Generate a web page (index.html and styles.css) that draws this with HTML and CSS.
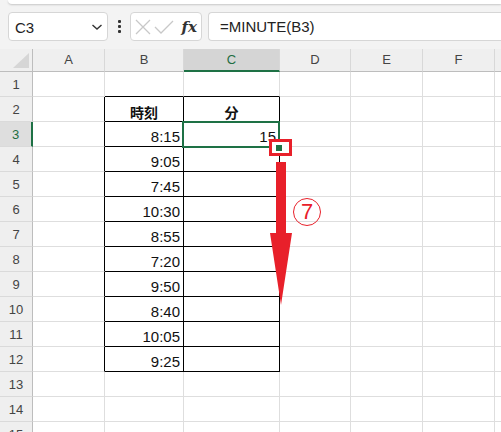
FILE: index.html
```html
<!DOCTYPE html>
<html lang="ja">
<head>
<meta charset="utf-8">
<link rel="stylesheet" href="styles.css">
</head>
<body>
<div class="app">
  <div class="topstrip"></div>
  <div class="toolbar">
    <div class="namebox"><span>C3</span>
      <svg class="chev" width="12" height="8" viewBox="0 0 12 8"><path d="M1.5 2 L6 6 L10.5 2" fill="none" stroke="#333" stroke-width="1.4"/></svg>
    </div>
    <div class="dots"><i></i><i></i><i></i></div>
    <div class="fxbox">
      <svg width="20" height="20" viewBox="0 0 20 20"><path d="M3 3 L17 17 M17 3 L3 17" stroke="#c8c8c8" stroke-width="1.3" fill="none"/></svg>
      <svg width="22" height="20" viewBox="0 0 22 20"><path d="M2 10 L8 16 L20 4" stroke="#c8c8c8" stroke-width="1.3" fill="none"/></svg>
      <span class="fx">fx</span>
    </div>
    <div class="formula">=MINUTE(B3)</div>
  </div>
  <div class="sheet">
    <div class="grid">
      <div class="corner"><span class="tri"></span></div>
      <div class="ch">A</div><div class="ch">B</div><div class="ch sel">C</div><div class="ch">D</div><div class="ch">E</div><div class="ch">F</div><div class="ch last"></div>

      <div class="rh">1</div><div class="c"></div><div class="c bb"></div><div class="c bb"></div><div class="c"></div><div class="c"></div><div class="c"></div><div class="c last"></div>
      <div class="rh">2</div><div class="c br"></div><div class="c tb hd">時刻</div><div class="c tb hd">分</div><div class="c"></div><div class="c"></div><div class="c"></div><div class="c last"></div>
      <div class="rh rsel">3</div><div class="c br"></div><div class="c tb">8:15</div><div class="c tb">15</div><div class="c"></div><div class="c"></div><div class="c"></div><div class="c last"></div>
      <div class="rh">4</div><div class="c br"></div><div class="c tb">9:05</div><div class="c tb"></div><div class="c"></div><div class="c"></div><div class="c"></div><div class="c last"></div>
      <div class="rh">5</div><div class="c br"></div><div class="c tb">7:45</div><div class="c tb"></div><div class="c"></div><div class="c"></div><div class="c"></div><div class="c last"></div>
      <div class="rh">6</div><div class="c br"></div><div class="c tb">10:30</div><div class="c tb"></div><div class="c"></div><div class="c"></div><div class="c"></div><div class="c last"></div>
      <div class="rh">7</div><div class="c br"></div><div class="c tb">8:55</div><div class="c tb"></div><div class="c"></div><div class="c"></div><div class="c"></div><div class="c last"></div>
      <div class="rh">8</div><div class="c br"></div><div class="c tb">7:20</div><div class="c tb"></div><div class="c"></div><div class="c"></div><div class="c"></div><div class="c last"></div>
      <div class="rh">9</div><div class="c br"></div><div class="c tb">9:50</div><div class="c tb"></div><div class="c"></div><div class="c"></div><div class="c"></div><div class="c last"></div>
      <div class="rh">10</div><div class="c br"></div><div class="c tb">8:40</div><div class="c tb"></div><div class="c"></div><div class="c"></div><div class="c"></div><div class="c last"></div>
      <div class="rh">11</div><div class="c br"></div><div class="c tb">10:05</div><div class="c tb"></div><div class="c"></div><div class="c"></div><div class="c"></div><div class="c last"></div>
      <div class="rh">12</div><div class="c br"></div><div class="c tb">9:25</div><div class="c tb"></div><div class="c"></div><div class="c"></div><div class="c"></div><div class="c last"></div>
      <div class="rh">13</div><div class="c"></div><div class="c"></div><div class="c"></div><div class="c"></div><div class="c"></div><div class="c"></div><div class="c last"></div>
      <div class="rh">14</div><div class="c"></div><div class="c"></div><div class="c"></div><div class="c"></div><div class="c"></div><div class="c"></div><div class="c last"></div>
      <div class="rh">15</div><div class="c"></div><div class="c"></div><div class="c"></div><div class="c"></div><div class="c"></div><div class="c"></div><div class="c last"></div>
    </div>
    <div class="selbox"></div>
    <div class="redbox"></div>
    <div class="handle"></div>
    <svg class="arrow" width="24" height="146" viewBox="0 0 24 146"><polygon points="7,0 17,0 17,71 23,71 12,143 1,71 7,71" fill="#e8202a"/></svg>
    <div class="num7">7</div>
  </div>
</div>
</body>
</html>
```

FILE: styles.css
```css
* { box-sizing: border-box; }
html, body { margin: 0; padding: 0; }
body {
  width: 501px; height: 432px; overflow: hidden;
  background: #f3f3f3;
  font-family: "Liberation Sans", "Noto Sans CJK JP", sans-serif;
  color: #222;
}
.app { width: 501px; height: 432px; overflow: hidden; }
.topstrip {
  height: 4px; margin-left: 8px; background: #fff;
  border-bottom-left-radius: 4px;
  box-shadow: 0 1px 2px rgba(0,0,0,0.18);
}
.toolbar {
  height: 45px;
  display: flex; align-items: flex-start;
  padding: 8px 0 0 8px;
  gap: 0;
}
.namebox {
  width: 100px; height: 29px;
  background: #fff; border: 1px solid #d6d6d6; border-radius: 4px;
  display: flex; align-items: center; justify-content: space-between;
  padding: 0 4px 0 6px;
  font-size: 15px; color: #222;
}
.namebox span { padding-top: 1px; }
.dots {
  width: 22px; height: 29px;
  display: flex; flex-direction: column; align-items: center; justify-content: center; gap: 2px;
}
.dots i { display: block; width: 3px; height: 3px; background: #333; border-radius: 1px; }
.fxbox {
  width: 72px; height: 29px;
  background: #fff; border: 1px solid #d6d6d6; border-radius: 4px;
  display: flex; align-items: center; padding: 0 4px 0 2px; gap: 0;
}
.fx {
  margin-left: auto;
  font-family: "DejaVu Serif", "Liberation Serif", serif;
  font-style: italic; font-weight: bold; font-size: 15px; color: #333;
}
.formula {
  margin-left: 6px; flex: 1; height: 29px;
  background: #fff; border: 1px solid #d6d6d6; border-right: none;
  border-radius: 4px 0 0 4px;
  font-size: 15px; line-height: 27px; padding-left: 11px; color: #222;
}
.sheet { position: relative; background: #fff; }
.grid {
  display: grid;
  grid-template-columns: 33px 72px 79px 96px 71px 72px 72px 1fr;
  grid-template-rows: 23px repeat(15, 25px);
}
.corner {
  background: #efefef; border-right: 1px solid #bdbdbd; border-bottom: 1px solid #bdbdbd;
  position: relative;
}
.tri {
  position: absolute; left: 13px; top: 4px;
  width: 0; height: 0;
  border-left: 16px solid transparent;
  border-bottom: 15px solid #d6d6d6;
}
.ch {
  background: #efefef; border-right: 1px solid #d8d8d8; border-bottom: 1px solid #bdbdbd;
  text-align: center; font-size: 13px; line-height: 22px; color: #444;
}
.ch.sel { background: #d5d5d5; color: #1e6e42; border-bottom: 2px solid #1e7145; }
.ch.last { border-right: none; }
.rh {
  background: #efefef; border-right: 1px solid #bdbdbd; border-bottom: 1px solid #dadada;
  text-align: center; font-size: 13px; line-height: 25px; color: #444;
}
.rh.rsel { background: #dedede; color: #1e6e42; border-right: 2px solid #1e7145; }
.c {
  border-right: 1px solid #dedede; border-bottom: 1px solid #dedede;
  font-size: 15px; text-align: right; padding: 6px 3px 0 0; color: #111;
  line-height: 18px;
}
.c.last { border-right: none; }
.c.bb { border-bottom-color: #000; }
.c.br { border-right-color: #000; }
.c.tb { border-right-color: #000; border-bottom-color: #000; }
.c.hd { text-align: center; font-weight: bold; padding-right: 0; font-family: "Noto Sans CJK JP", sans-serif; font-size: 14px; }
.selbox {
  position: absolute; left: 182px; top: 72px; width: 98px; height: 27px;
  border: 2px solid #1e7145;
}
.redbox {
  position: absolute; left: 269px; top: 90px; width: 23px; height: 17px;
  border: 3px solid #e8202a; background: #fff;
}
.handle {
  position: absolute; left: 276px; top: 96px; width: 6px; height: 6px;
  background: #1e7145;
}
.arrow { position: absolute; left: 269px; top: 113px; }
.num7 {
  position: absolute; left: 293px; top: 149px; width: 28px; height: 28px;
  border: 1.5px solid #e8202a; border-radius: 50%;
  color: #e8202a; font-size: 22px; line-height: 25px; text-align: center;
}
```
